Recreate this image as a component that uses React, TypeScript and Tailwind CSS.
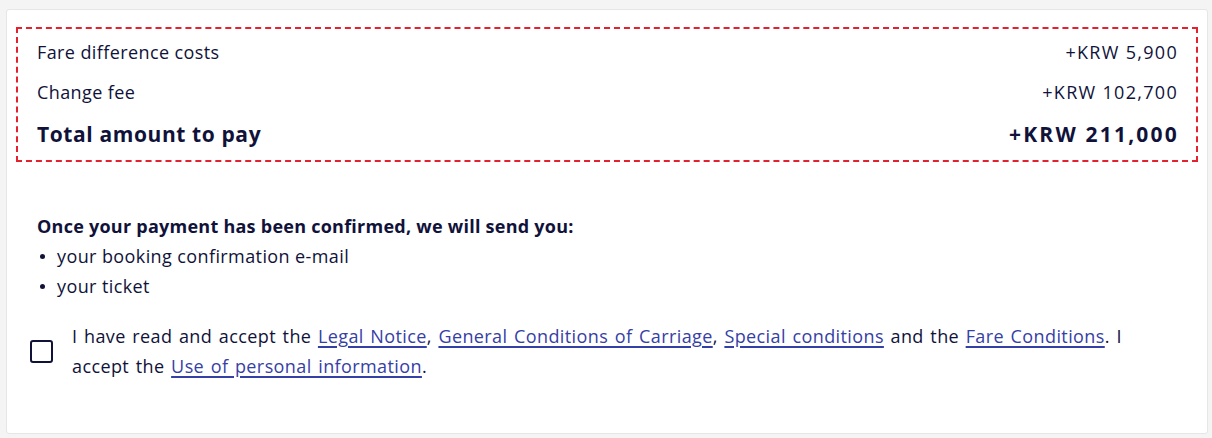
import React from "react";

const Link = ({ children }: { children: React.ReactNode }) => (
  <a href="#" className="text-[#3540a6] underline decoration-[1.5px] underline-offset-[3px]">
    {children}
  </a>
);

const Bullet = ({ children }: { children: React.ReactNode }) => (
  <li className="flex items-center">
    <span className="w-[20px] shrink-0 pl-[3px]">
      <span className="block h-[5px] w-[5px] rounded-full bg-[#10123a]" />
    </span>
    <span>{children}</span>
  </li>
);

export default function App() {
  return (
    <div
      className="min-h-screen bg-[#f4f4f4] pl-[6px] pt-[9px] text-[#10123a]"
      style={{ fontFamily: "'Open Sans', 'Noto Sans', sans-serif" }}
    >
      <div className="w-[1202px] h-[425px] rounded-[3px] border border-[#e6e6e6] bg-white px-[9px] pt-[17px]">
        <div className="border-2 border-dashed border-[#e4212e] px-[19px] pt-2 pb-[9px]">
          <div className="flex justify-between text-[18px] tracking-[0.4px] leading-[30px]">
            <span>Fare difference costs</span>
            <span className="mr-[-1px] tracking-[1.3px]">+KRW 5,900</span>
          </div>
          <div className="mt-[10px] flex justify-between text-[18px] tracking-[0.4px] leading-[30px]">
            <span>Change fee</span>
            <span className="mr-[-1px] tracking-[1.3px]">+KRW 102,700</span>
          </div>
          <div className="mt-[10px] flex justify-between text-[21px] font-bold tracking-[0.6px] leading-[34px]">
            <span>Total amount to pay</span>
            <span className="mr-[-2px] tracking-[2.2px]">+KRW 211,000</span>
          </div>
        </div>

        <div className="mt-[49px] pl-[21px] text-[18px] tracking-[0.4px] leading-[30px]">
          <p className="font-bold tracking-[0.25px]">Once your payment has been confirmed, we will send you:</p>
          <ul>
            <Bullet>your booking confirmation e-mail</Bullet>
            <Bullet>your ticket</Bullet>
          </ul>
        </div>

        <div className="mt-[20px] flex items-center pl-[14px] pr-[20px]">
          <span className="h-[23px] w-[23px] shrink-0 rounded-[3px] border-2 border-[#10123a]" />
          <p className="ml-[19px] text-[18px] tracking-[0.4px] [word-spacing:1.5px] leading-[30px]">
            I have read and accept the <Link>Legal Notice</Link>, <Link>General Conditions of Carriage</Link>,{" "}
            <Link>Special conditions</Link> and the <Link>Fare Conditions</Link>. I accept the{" "}
            <Link>Use of personal information</Link>.
          </p>
        </div>
      </div>
    </div>
  );
}
